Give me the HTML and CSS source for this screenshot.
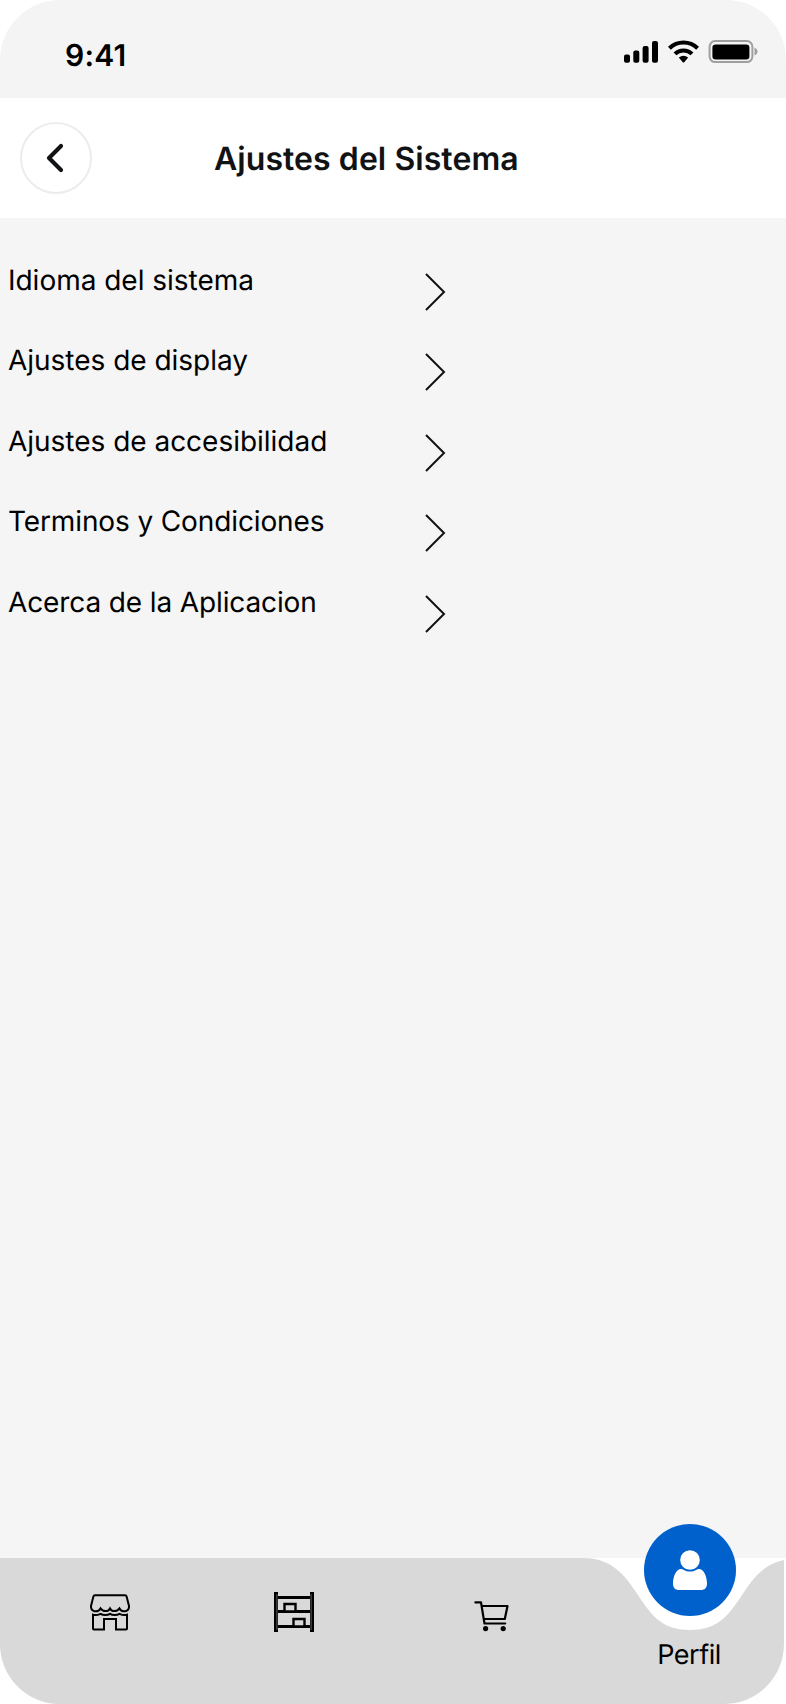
FILE: index.html
```html
<!DOCTYPE html>
<html lang="es">
<head>
<meta charset="utf-8">
<title>Ajustes del Sistema</title>
<link rel="stylesheet" href="styles.css">
</head>
<body>
<div class="phone">
  <div class="status">
    <span class="time">9:41</span>
    <svg class="status-icons" width="136" height="24" viewBox="0 0 136 24">
      <rect x="0" y="14.5" width="6" height="8.2" rx="2"/>
      <rect x="9.3" y="10.5" width="6" height="12.2" rx="2"/>
      <rect x="18.6" y="6" width="6" height="16.7" rx="2"/>
      <rect x="28" y="1" width="6" height="21.7" rx="2"/>
      <g fill="none" stroke="#000" stroke-width="4">
        <path d="M45.4 8.2A20.2 20.2 0 0 1 73.6 8.2"/>
        <path d="M51 13.9A12.2 12.2 0 0 1 68 13.9"/>
      </g>
      <path d="M54.8 17.6Q59.5 13.8 64.2 17.6L60.2 22.2Q59.5 22.8 58.8 22.2Z"/>
      <rect x="85.6" y="1.1" width="42.8" height="21" rx="5.6" fill="none" stroke="#9f9f9f" stroke-width="2"/>
      <rect x="88.4" y="4.4" width="37" height="15" rx="3.2"/>
      <path d="M130.5 7.6Q133.6 9 133.6 11.6T130.5 15.6Z" fill="#9f9f9f"/>
    </svg>
  </div>
  <header class="header">
    <button class="back" aria-label="Volver">
      <svg width="20" height="32" viewBox="0 0 20 32"><path d="M16 4L4 16L16 28" fill="none" stroke="#111214" stroke-width="4.2" stroke-linecap="round" stroke-linejoin="round"/></svg>
    </button>
    <h1 class="title">Ajustes del Sistema</h1>
  </header>
  <main class="list">
    <a class="row"><span class="label">Idioma del sistema</span><svg class="chev" width="22" height="40" viewBox="0 0 22 40"><path d="M2 2L20 20L2 38"/></svg></a>
    <a class="row"><span class="label">Ajustes de display</span><svg class="chev" width="22" height="40" viewBox="0 0 22 40"><path d="M2 2L20 20L2 38"/></svg></a>
    <a class="row"><span class="label">Ajustes de accesibilidad</span><svg class="chev" width="22" height="40" viewBox="0 0 22 40"><path d="M2 2L20 20L2 38"/></svg></a>
    <a class="row"><span class="label tight">Terminos y Condiciones</span><svg class="chev" width="22" height="40" viewBox="0 0 22 40"><path d="M2 2L20 20L2 38"/></svg></a>
    <a class="row"><span class="label tight">Acerca de la Aplicacion</span><svg class="chev" width="22" height="40" viewBox="0 0 22 40"><path d="M2 2L20 20L2 38"/></svg></a>
  </main>
  <nav class="nav">
    <svg class="nav-bg" width="786" height="146" viewBox="0 0 786 146">
      <path d="M560 0H786V146H560Z" fill="#fff"/>
      <path d="M0 0H582C609 0 622 13 636 34C650 55 660 72 690 72C720 72 730 55 744 34C756 16 766 6 784 2V86A60 60 0 0 1 724 146H0Z" fill="#d9d9d9"/>
    </svg>
    <div class="tabs">
      <svg class="tab" width="40" height="40" viewBox="0 0 40 40" fill="none" stroke="#000" stroke-width="2">
        <path d="M5 2.200H35C36 2.200 36.400 2.600 36.600 3.400L39 13C39.400 19 32 20 29.500 15.400C27 19 22 19 20 15.400C18 19 13 19 10.500 15.400C8 20 .6 19 1 13L3.400 3.400C3.600 2.600 4 2.200 5 2.200Z"/>
        <path d="M3 21.700V35.700Q3 36.400 4 36.400H14V26H26V36.400H36Q37 36.400 37 35.700V21.700C34.500 22.500 32 22 29.500 20.800C27 22.500 22.500 22.500 20 20.800C17.500 22.500 13 22.500 10.500 20.800C8 22 5.500 22.500 3 21.700Z"/>
      </svg>
      <svg class="tab" width="40" height="40" viewBox="0 0 40 40">
        <path d="M0 0H4V40H0ZM36 0H40V40H36ZM4 4H36V7H4ZM4 18H36V21H4ZM4 33H36V36H4Z"/>
        <path d="M10.500 19.500V12H21.500V19.500ZM19.500 34.500V27H30.500V34.500Z" fill="#d9d9d9" stroke="#000" stroke-width="2.400"/>
        <path d="M2.900 2V38M37.100 2V38" stroke="#777" stroke-width=".8"/>
      </svg>
      <svg class="tab cart" width="40" height="40" viewBox="0 0 40 40" fill="none" stroke="#000" stroke-width="2.200" stroke-linecap="round" stroke-linejoin="round">
        <path d="M5.400 6.400H11L14.500 27.500H35.200M12 10H37.500L34.800 23H13.800"/>
        <circle cx="15.600" cy="32.600" r="2.600" fill="#000" stroke="none"/><circle cx="33.200" cy="32.600" r="2.600" fill="#000" stroke="none"/>
      </svg>
      <a class="profile">
        <span class="avatar"><svg width="36" height="42" viewBox="0 0 36 42" fill="#fff"><circle cx="18" cy="11" r="9.800"/><path d="M9.300 20C11 20 13 22.600 18 22.600S25 20 26.700 20C32 20 35 28 35 34.500C35 39 32.500 41 29 41H7C3.500 41 1 39 1 34.500C1 28 4 20 9.300 20Z"/></svg></span>
        <span class="profile-label">Perfil</span>
      </a>
    </div>
  </nav>
</div>
</body>
</html>
```
FILE: styles.css
```css
body {
  margin: 0;
  background: #fff;
  font-family: Inter, sans-serif;
  color: #000;
  text-rendering: geometricPrecision;
}
.phone {
  width: 786px;
  height: 1704px;
  background: #f4f4f4;
  border-radius: 60px;
  overflow: hidden;
  display: flex;
  flex-direction: column;
}
.status {
  height: 98px;
  display: flex;
  justify-content: space-between;
  box-sizing: border-box;
  padding: 36px 26px 0 65px;
}
.time {
  font-size: 30px;
  line-height: 40px;
  font-weight: 600;
  letter-spacing: .2px;
}
.status-icons { margin-top: 4px; }
.header {
  height: 120px;
  background: #fff;
  display: grid;
  grid-template-columns: 72px 1fr;
  align-items: center;
  padding-left: 20px;
}
.back {
  width: 72px;
  height: 72px;
  box-sizing: border-box;
  border: 2px solid #ececec;
  border-radius: 50%;
  background: #fff;
  padding: 0 2px 0 0;
  display: flex;
  align-items: center;
  justify-content: center;
}
.title {
  margin: 2px 0 0 122px;
  font-size: 32px;
  line-height: 40px;
  font-weight: 600;
  letter-spacing: .06px;
  color: #111214;
}
.list {
  flex: 1;
  padding: 42px 0 0 8px;
  background: #f5f5f5;
}
.row {
  width: 438px;
  height: 80.4px;
  display: flex;
  justify-content: space-between;
}
.label {
  font-size: 28px;
  line-height: 41px;
  letter-spacing: -.02px;
}
.label.tight { letter-spacing: -.12px; }
.chev {
  margin-top: 12px;
  fill: none;
  stroke: #111;
  stroke-width: 2;
}
.nav {
  height: 146px;
  display: grid;
}
.nav-bg, .tabs { grid-area: 1 / 1; }
.tabs {
  display: flex;
  align-items: flex-start;
  padding-left: 90px;
}
.tab { margin: 34px 144px 0 0; }
.tab:first-child { margin-top: 35px; }
.tab.cart { margin: 38px 134px 0 12px; }
.profile {
  margin-top: -34px;
  width: 92px;
  display: flex;
  flex-direction: column;
  align-items: center;
}
.avatar {
  width: 92px;
  height: 92px;
  border-radius: 50%;
  background: #0061cc;
  display: flex;
  align-items: center;
  justify-content: center;
}
.profile-label {
  margin: 19px 2px 0 0;
  font-size: 27px;
  line-height: 40px;
  letter-spacing: -.5px;
}
```
